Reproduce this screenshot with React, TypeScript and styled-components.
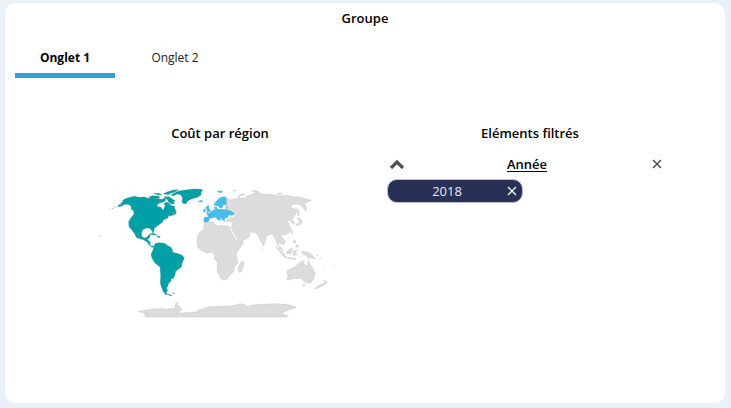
import React, { useState } from "react";
import styled, { createGlobalStyle } from "styled-components";

const GlobalStyle = createGlobalStyle`
  * { box-sizing: border-box; }
  body {
    margin: 0;
    background: #eaf0f8;
    color: #000;
    font-family: "Open Sans", "Noto Sans", sans-serif;
    font-size: 13px;
    line-height: 18px;
  }
  button { font: inherit; color: inherit; border: 0; padding: 0; background: none; cursor: pointer; }
`;

const Page = styled.div`
  min-height: 100vh;
  display: flex;
  padding: 3px 6px 5px 5px;
`;

const Card = styled.main`
  flex: 1;
  background: #fff;
  border-radius: 10px;
  padding: 6px 10px;
`;

const Title = styled.h1`
  margin: 0;
  font-size: 13px;
  font-weight: 600;
  text-align: center;
`;

const Tabs = styled.nav`
  display: flex;
  gap: 10px;
  margin-top: 12px;
`;

const Tab = styled.button<{ $active: boolean }>`
  && {
    width: 100px;
    height: 39px;
    padding-top: 4px;
    font-size: 12px;
    font-weight: ${(p) => (p.$active ? 700 : 400)};
    color: ${(p) => (p.$active ? "#000" : "#222")};
    border-bottom: 5px solid ${(p) => (p.$active ? "#329fd9" : "transparent")};
  }
`;

const Columns = styled.div`
  display: grid;
  grid-template-columns: 1fr 1fr;
  margin: 46px 30px 0 50px;
`;

const Panel = styled.section`
  display: flex;
  flex-direction: column;
`;

const PanelTitle = styled.h2`
  margin: 0;
  font-size: 13px;
  font-weight: 600;
  text-align: center;
`;

const Map = styled.svg`
  width: 245px;
  height: 145px;
  margin: 38px 0 0 30px;
  stroke-width: 1;
  stroke-linejoin: round;
`;

const Filter = styled.div`
  padding: 0 18px 0 12px;
`;

const FilterHeader = styled.div`
  display: grid;
  grid-template-columns: 20px 1fr 20px;
  align-items: center;
  height: 20px;
  margin-top: 12px;
`;

const FilterName = styled.h3`
  margin: 0;
  font-size: 13px;
  font-weight: 600;
  text-align: center;
  text-decoration: underline;
  text-underline-offset: 2px;
`;

const IconButton = styled.button`
  display: flex;
  align-items: center;
  justify-content: center;
  width: 20px;
  height: 20px;
`;

const Chip = styled.div`
  display: grid;
  grid-template-columns: 1fr 20px;
  align-items: center;
  width: 136px;
  height: 24px;
  margin-top: 5px;
  padding-left: 4px;
  background: #283056;
  border: 1px solid #b9bdd0;
  border-radius: 10px;
  color: #fff;
  text-align: center;
`;

const ChipLabel = styled.span`
  color: #e8eaf2;
`;

const LAND = {
  americas: [
    "M69 76L80 72L76 70L85 65L82 62L91 56L100 53L118 49L132 52L148 51L160 55L175 54L186 57L202 58L208 54L213 60L207 65L196 68L187 73L187 80L198 82L204 91L208 84L210 78L208 70L214 66L222 70L229 77L238 78L239 85L243 94L232 98L238 101L241 97L243 101L233 106L221 108L217 115L205 120L202 127L188 137L178 145L175 161L171 153L165 145L154 144L143 149L140 157L140 168L147 174L157 171L161 165L166 166L162 176L157 178L161 183L166 185L165 195L169 198L174 197L180 201L172 202L163 196L158 187L145 179L125 173L118 160L109 148L102 140L101 125L106 116L117 102L116 92L109 88L108 77L98 73L90 73L80 78L70 80Z",
    "M218 60L207 50L222 50L241 63L235 65L239 71L229 72L221 67Z",
    "M162 50L174 47L192 49L194 55L178 56L166 54Z M176 41L190 40L201 43L190 45Z M205 41L218 35L236 30L250 29L238 37L226 40L219 44Z",
    "M227 46L248 34L270 30L297 27L318 28L323 30L318 37L319 44L308 52L291 56L278 63L272 72L263 70L261 64L263 54L257 44L246 42L237 47Z",
    "M162 162L175 160L186 166L172 164Z M187 168L196 169L193 172L186 171Z M231 91L244 95L242 102L235 96Z",
    "M180 191L190 188L209 190L216 196L228 202L233 211L232 217L246 220L260 225L268 233L265 241L261 250L259 261L250 268L242 274L240 285L235 295L228 297L228 304L221 309L219 317L215 324L218 333L213 337L218 343L212 344L204 333L200 323L196 309L197 286L195 261L180 249L172 237L168 223L173 213L177 201Z",
    "M219 343L232 346L224 347Z M235 338L239 339L235 341Z",
  ],
  europe: [
    "M326 125L327 112L340 111L337 104L334 100L344 99L352 92L360 88L358 81L366 82L368 88L380 88L394 88L398 83L394 81L395 77L386 73L383 82L376 85L370 78L360 77L356 74L362 66L368 59L377 52L389 50L394 53L394 83L394 89L403 91L413 96L418 101L413 106L400 106L398 113L391 114L388 121L389 125L382 119L375 111L377 121L369 120L362 111L355 113L345 115L340 125L331 127Z",
    "M335 79L341 75L342 85L348 94L335 98L337 90L332 84Z M326 87L332 87L332 95L325 96Z M310 64L319 60L325 64L316 67Z M366 34L382 32L380 38L369 37Z",
  ],
  others: [
    "M329 128L344 126L356 126L358 132L370 139L379 136L394 138L402 139L406 151L416 169L426 184L443 184L446 188L435 204L425 217L424 230L428 239L427 252L419 259L416 275L406 284L397 297L386 300L378 296L370 281L366 270L368 248L358 235L360 225L352 217L337 219L321 214L308 202L306 187L307 173L312 159L326 146L327 133Z",
    "M436 249L445 243L447 252L439 275L432 277L430 266Z",
    "M394 54L407 60L416 58L432 54L450 54L455 48L473 43L487 37L505 43L525 43L540 45L556 48L578 46L595 50L617 52L632 56L649 61L639 65L636 69L627 68L634 79L634 93L624 83L617 76L609 72L596 73L588 78L587 83L602 88L602 101L595 113L591 119L599 128L597 134L588 126L582 120L573 122L582 129L582 137L590 149L580 160L566 165L559 163L558 168L568 180L571 189L563 194L557 192L552 184L549 195L562 207L564 213L555 205L546 190L540 177L532 162L522 164L513 170L510 187L505 198L494 178L488 163L476 157L461 156L466 160L463 171L447 180L434 187L426 175L416 158L408 142L411 135L414 125L394 125L395 119L409 111L419 115L418 101L403 90L397 86L395 78Z",
    "M603 85L611 92L613 101L610 108L606 96Z M607 113L616 116L622 124L619 132L606 137L603 133L614 128L611 120Z M589 151L593 156L590 162Z M596 178L602 184L601 191L596 187Z M606 192L611 200L602 201Z M542 200L551 204L568 222L572 231L565 227L554 216Z M574 216L588 205L594 209L588 219L582 222L574 220Z M566 230L586 233L602 235L602 238L585 237Z M597 212L606 212L601 217L606 225L600 225L596 229L594 219Z M620 213L630 216L639 217L652 225L660 238L650 233L641 235L634 228L624 222Z",
    "M577 271L588 266L603 259L609 251L620 243L628 245L626 251L638 259L640 241L645 253L652 263L661 278L656 297L647 308L634 309L624 301L619 294L608 296L597 295L579 300L575 298L579 287L576 279Z M624 313L630 314L627 320L622 317Z M689 301L693 303L697 308L684 317L663 327L660 324L680 312L688 309Z",
    "M130 394L158 389L180 386L199 387L200 382L205 387L226 386L239 386L242 370L250 366L245 376L254 379L260 389L252 395L244 399L264 399L286 396L303 396L310 390L326 386L342 380L375 379L400 379L421 376L435 371L452 375L458 380L472 375L504 373L534 371L575 373L603 380L603 383L585 388L568 395L560 403L581 407L574 411L153 411L148 406L162 404L145 401L157 398L135 397Z",
    "M413 31L424 32L417 33Z M428 50L437 43L446 41L450 44L438 46L432 53Z M471 34L480 31L492 36L484 38Z M545 40L558 39L563 43L551 43Z",
  ],
};

const Continent = styled.path<{ $fill: string; $edge: string }>`
  fill: ${(p) => p.$fill};
  stroke: ${(p) => p.$edge};
`;

const Specks = styled.path`
  fill: none;
  stroke: #4f9c9f;
  stroke-width: 2;
`;

const FaintSpecks = styled(Specks)`
  stroke: #cfcfcf;
`;

function WorldMap() {
  return (
    <Map viewBox="0 0 735 435" role="img" aria-label="Coût par région">
      {LAND.others.map((d) => <Continent key={d} d={d} $fill="#dcdcdc" $edge="#b8b8b8" />)}
      {LAND.americas.map((d) => <Continent key={d} d={d} $fill="#00a0a6" $edge="#3d8588" />)}
      {LAND.europe.map((d) => <Continent key={d} d={d} $fill="#47bceb" $edge="#68aeca" />)}
      <Specks d="M43 88l3-1M51 86l4-2M59 82l5-2M15 167l3 2M204 58l8-3M190 171l4 2" />
      <FaintSpecks d="M148 215l2 2M664 225l8 3M674 232l7 4M684 265l4 3M714 258l6-2M605 206l5 3M612 230l3 4M500 214l2-6" />
    </Map>
  );
}

function Cross({ color }: { color: string }) {
  return (
    <svg width="10" height="10" viewBox="0 0 10 10" aria-hidden="true">
      <path d="M1 1L9 9M9 1L1 9" stroke={color} strokeWidth="1.3" fill="none" />
    </svg>
  );
}

function Chevron() {
  return (
    <svg width="16" height="10" viewBox="0 0 16 10" aria-hidden="true">
      <path d="M2 9L8 3L14 9" stroke="#505050" strokeWidth="3.2" fill="none" />
    </svg>
  );
}

export default function App() {
  const [active, setActive] = useState(0);
  return (
    <>
      <GlobalStyle />
      <Page>
        <Card>
          <Title>Groupe</Title>
          <Tabs aria-label="Onglets">
            {["Onglet 1", "Onglet 2"].map((name, i) => (
              <Tab key={name} $active={active === i} aria-pressed={active === i} onClick={() => setActive(i)}>
                {name}
              </Tab>
            ))}
          </Tabs>
          <Columns>
            <Panel>
              <PanelTitle>Coût par région</PanelTitle>
              <WorldMap />
            </Panel>
            <Panel>
              <PanelTitle>Eléments filtrés</PanelTitle>
              <Filter>
                <FilterHeader>
                  <IconButton aria-label="Replier"><Chevron /></IconButton>
                  <FilterName>Année</FilterName>
                  <IconButton aria-label="Effacer le filtre"><Cross color="#404040" /></IconButton>
                </FilterHeader>
                <Chip>
                  <ChipLabel>2018</ChipLabel>
                  <IconButton aria-label="Retirer 2018"><Cross color="#fff" /></IconButton>
                </Chip>
              </Filter>
            </Panel>
          </Columns>
        </Card>
      </Page>
    </>
  );
}
